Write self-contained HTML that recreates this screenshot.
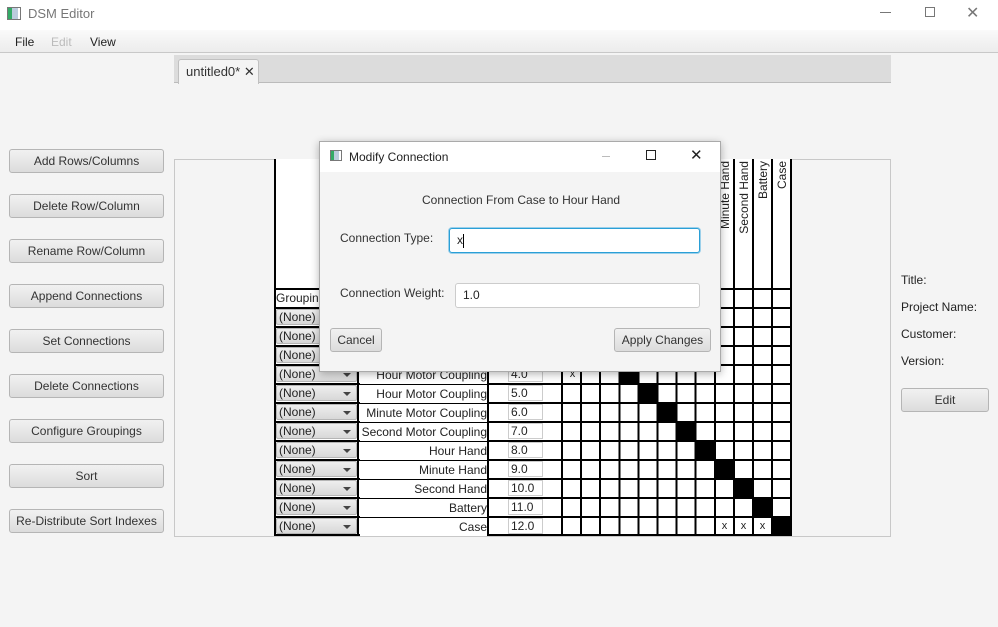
<!DOCTYPE html>
<html><head><style>
*{box-sizing:border-box;margin:0;padding:0}
body{width:998px;height:627px;background:#f4f4f4;font-family:"Liberation Sans",sans-serif;font-size:12px;color:#333;position:relative;overflow:hidden}
.a{position:absolute}
.btn{position:absolute;left:9px;width:155px;height:24px;border:1px solid #b5b5b5;border-radius:3px;background:linear-gradient(#f1f1f1,#dcdcdc);text-align:center;line-height:22px;font-size:12px;color:#333}
.vl{position:absolute;width:2px;background:#000}
.hl{position:absolute;height:2px;background:#000}
.cb{position:absolute;left:276px;width:81px;height:16px;border:1px solid #b5b5b5;border-radius:2px;background:linear-gradient(#eee,#d8d8d8);font-size:12px;line-height:14px;padding-left:2px;color:#222}
.cb:after{content:"";position:absolute;right:5px;top:6px;border-left:4px solid transparent;border-right:4px solid transparent;border-top:4px solid #444}
.nm{position:absolute;left:360px;width:127px;text-align:right;font-size:12px;color:#222;height:18px;line-height:18px;background:#fff}
.sv{position:absolute;left:508px;width:35px;height:16px;border:1px solid #ccc;background:#fff;font-size:12px;line-height:14px;padding-left:2px;color:#222}
.bk{position:absolute;width:19px;height:19px;background:#000}
.x{position:absolute;font-size:11px;color:#222;width:19px;text-align:center}
.vt{position:absolute;top:289px;width:128px;height:16px;line-height:16px;text-align:right;white-space:nowrap;transform-origin:0 0;transform:rotate(-90deg);font-size:12px;color:#222}
.lab{position:absolute;left:901px;font-size:12px;color:#222}
</style></head><body>
<div class="a" style="left:0;top:0;width:998px;height:30px;background:#fff"></div>
<div class="a" style="left:7px;top:7px;width:14px;height:13px;border:1px solid #777;background:linear-gradient(90deg,#3a6 0 4px,#bcd 4px 10px,#fff 10px)"></div>
<div class="a" style="left:28px;top:6px;font-size:13px;color:#777">DSM Editor</div>
<div class="a" style="left:880px;top:12px;width:11px;height:1px;background:#777"></div>
<div class="a" style="left:925px;top:7px;width:10px;height:10px;border:1px solid #777"></div>
<div class="a" style="left:966px;top:3px;font-size:16px;color:#777">✕</div>
<div class="a" style="left:0;top:30px;width:998px;height:23px;background:linear-gradient(#fafafa,#ececec);border-bottom:1px solid #c8c8c8"></div>
<div class="a" style="left:15px;top:35px;font-size:12px;color:#222">File</div>
<div class="a" style="left:51px;top:35px;font-size:12px;color:#bbb">Edit</div>
<div class="a" style="left:90px;top:35px;font-size:12px;color:#222">View</div>
<div class="a" style="left:174px;top:55px;width:717px;height:28px;background:#dcdcdc;border-bottom:1px solid #bbb"></div>
<div class="a" style="left:178px;top:59px;width:81px;height:25px;background:#f4f4f4;border:1px solid #c0c0c0;border-bottom:none;border-radius:3px 3px 0 0;font-size:13px;line-height:24px;padding-left:7px;color:#333">untitled0* <span style="font-size:13px">✕</span></div>

<div class="btn" style="top:149px">Add Rows/Columns</div>
<div class="btn" style="top:194px">Delete Row/Column</div>
<div class="btn" style="top:239px">Rename Row/Column</div>
<div class="btn" style="top:284px">Append Connections</div>
<div class="btn" style="top:329px">Set Connections</div>
<div class="btn" style="top:374px">Delete Connections</div>
<div class="btn" style="top:419px">Configure Groupings</div>
<div class="btn" style="top:464px">Sort</div>
<div class="btn" style="top:509px">Re-Distribute Sort Indexes</div>

<div class="a" style="left:174px;top:159px;width:717px;height:378px;border:1px solid #c8c8c8"></div>
<div class="a" style="left:274px;top:159px;width:518px;height:377px;background:#fff"></div>

<div class="vl" style="left:274px;top:159px;height:377px"></div>
<div class="vl" style="left:357px;top:289px;height:247px"></div>
<div class="vl" style="left:487px;top:289px;height:247px"></div>
<div class="a" style="left:561px;top:159px;width:231px;height:377px;background:repeating-linear-gradient(90deg,#000 0 2px,transparent 2px 19.1px)"></div>
<div class="vl" style="left:790px;top:159px;height:377px"></div>
<div class="a" style="left:274px;top:288px;width:518px;height:248px;background:repeating-linear-gradient(180deg,#000 0 2px,transparent 2px 19px)"></div>
<div class="hl" style="left:274px;top:534px;width:518px"></div>

<div class="a" style="left:276px;top:291px;font-size:12px;color:#222">Grouping</div>

<div class="vt" style="left:717px">Minute Hand</div>
<div class="vt" style="left:736px">Second Hand</div>
<div class="vt" style="left:755px">Battery</div>
<div class="vt" style="left:774px">Case</div>

<div class="cb" style="top:309px">(None)</div>
<div class="cb" style="top:328px">(None)</div>
<div class="cb" style="top:347px">(None)</div>
<div class="cb" style="top:366px">(None)</div>
<div class="cb" style="top:385px">(None)</div>
<div class="cb" style="top:404px">(None)</div>
<div class="cb" style="top:423px">(None)</div>
<div class="cb" style="top:442px">(None)</div>
<div class="cb" style="top:461px">(None)</div>
<div class="cb" style="top:480px">(None)</div>
<div class="cb" style="top:499px">(None)</div>
<div class="cb" style="top:518px">(None)</div>

<div class="nm" style="top:366px">Hour Motor Coupling</div>
<div class="nm" style="top:385px">Hour Motor Coupling</div>
<div class="nm" style="top:404px">Minute Motor Coupling</div>
<div class="nm" style="top:423px">Second Motor Coupling</div>
<div class="nm" style="top:442px">Hour Hand</div>
<div class="nm" style="top:461px">Minute Hand</div>
<div class="nm" style="top:480px">Second Hand</div>
<div class="nm" style="top:499px">Battery</div>
<div class="nm" style="top:518px">Case</div>

<div class="sv" style="top:366px">4.0</div>
<div class="sv" style="top:385px">5.0</div>
<div class="sv" style="top:404px">6.0</div>
<div class="sv" style="top:423px">7.0</div>
<div class="sv" style="top:442px">8.0</div>
<div class="sv" style="top:461px">9.0</div>
<div class="sv" style="top:480px">10.0</div>
<div class="sv" style="top:499px">11.0</div>
<div class="sv" style="top:518px">12.0</div>

<div class="bk" style="left:620px;top:365px"></div>
<div class="bk" style="left:639px;top:384px"></div>
<div class="bk" style="left:658px;top:403px"></div>
<div class="bk" style="left:677px;top:422px"></div>
<div class="bk" style="left:696px;top:441px"></div>
<div class="bk" style="left:715px;top:460px"></div>
<div class="bk" style="left:734px;top:479px"></div>
<div class="bk" style="left:753px;top:498px"></div>
<div class="bk" style="left:772px;top:517px"></div>
<div class="x" style="left:563px;top:368px">x</div>
<div class="x" style="left:715px;top:520px">x</div>
<div class="x" style="left:734px;top:520px">x</div>
<div class="x" style="left:753px;top:520px">x</div>

<div class="lab" style="top:273px">Title:</div>
<div class="lab" style="top:300px">Project Name:</div>
<div class="lab" style="top:327px">Customer:</div>
<div class="lab" style="top:354px">Version:</div>
<div class="btn" style="left:901px;top:388px;width:88px">Edit</div>

<div class="a" style="left:319px;top:141px;width:402px;height:231px;background:#f4f4f4;border:1px solid #aaa;box-shadow:0 2px 8px rgba(0,0,0,.3)"></div>
<div class="a" style="left:320px;top:142px;width:400px;height:30px;background:#fff"></div>
<div class="a" style="left:330px;top:150px;width:12px;height:11px;border:1px solid #777;background:linear-gradient(90deg,#3a6 0 3px,#bcd 3px 8px,#fff 8px)"></div>
<div class="a" style="left:349px;top:150px;font-size:12px;color:#222">Modify Connection</div>
<div class="a" style="left:602px;top:156px;width:8px;height:1px;background:#bbb"></div>
<div class="a" style="left:646px;top:150px;width:10px;height:10px;border:1px solid #222"></div>
<div class="a" style="left:690px;top:146px;font-size:15px;color:#222">✕</div>
<div class="a" style="left:422px;top:193px;font-size:12px;color:#333">Connection From Case to Hour Hand</div>
<div class="a" style="left:340px;top:231px;font-size:12px;color:#333">Connection Type:</div>
<div class="a" style="left:449px;top:228px;width:251px;height:25px;border:1px solid #2a9fd6;border-radius:3px;background:#fff;box-shadow:0 0 0 1px #9cd0ea;font-size:12px;line-height:23px;padding-left:7px;color:#222">x<span style="display:inline-block;width:1px;height:14px;background:#000;vertical-align:middle"></span></div>
<div class="a" style="left:340px;top:286px;font-size:12px;color:#333">Connection Weight:</div>
<div class="a" style="left:455px;top:283px;width:245px;height:25px;border:1px solid #ccc;border-radius:3px;background:#fff;font-size:12px;line-height:23px;padding-left:7px;color:#222">1.0</div>
<div class="btn" style="left:330px;top:328px;width:52px">Cancel</div>
<div class="btn" style="left:614px;top:328px;width:97px">Apply Changes</div>
</body></html>
